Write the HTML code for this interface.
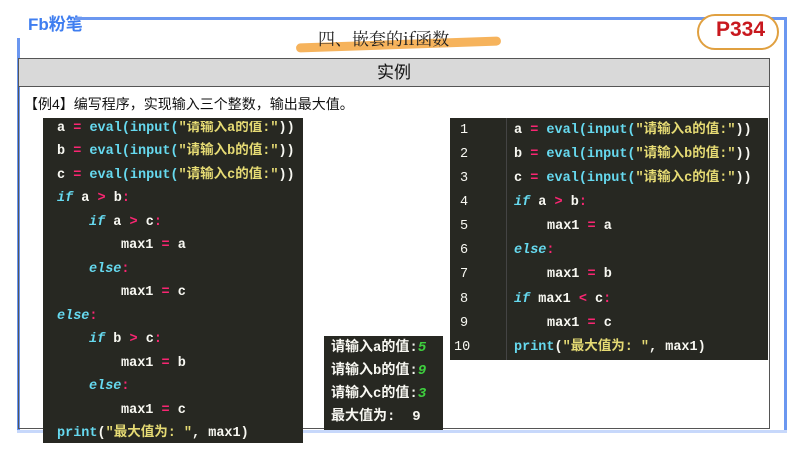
<!DOCTYPE html>
<html><head><meta charset="utf-8"><style>
*{margin:0;padding:0;box-sizing:border-box}
body{width:800px;height:450px;background:#fff;position:relative;overflow:hidden;font-family:"Liberation Sans","Noto Sans CJK SC",sans-serif}
.a{position:absolute}
.code{background:#272822;font-family:"Liberation Mono","Noto Sans CJK SC",monospace;font-size:13.5px;color:#f8f8f2;font-weight:bold}
.code div{position:absolute;white-space:pre;line-height:16px;height:16px}
.p{color:#f92672}.c{color:#66d9ef}.s{color:#e6db74}.k{color:#66d9ef;font-style:italic}.g{color:#3ecf3e;font-style:italic}
</style></head><body>
<div class="a" style="left:28px;top:10px;font-size:17px;font-weight:bold;color:#3f7ef0">Fb粉笔</div>
<div class="a" style="left:75px;top:17px;width:712px;height:3px;background:#6b97f0"></div>
<div class="a" style="left:17px;top:38px;width:3px;height:395px;background:#6b97f0"></div>
<div class="a" style="left:784px;top:17px;width:3px;height:416px;background:#6b97f0"></div>
<div class="a" style="left:17px;top:430px;width:770px;height:3px;background:#c7d8fb"></div>
<div class="a" style="left:296px;top:40px;width:205px;height:9px;background:#f4a640;border-radius:5px;transform:rotate(-2deg);opacity:.85"></div>
<div class="a" style="left:318px;top:27px;font-size:17px;font-family:'Noto Serif CJK SC',serif;color:#222;line-height:22px">四、嵌套的if函数</div>
<div class="a" style="left:697px;top:14px;width:82px;height:36px;border:2px solid #e0a040;border-radius:20px;background:#fff"></div>
<div class="a" style="left:716px;top:18px;font-size:21px;font-weight:bold;color:#c8181e">P334</div>
<div class="a" style="left:18px;top:58px;width:752px;height:29px;background:#d9d9d9;border:1px solid #555;text-align:center;font-size:17px;line-height:27px;color:#111">实例</div>
<div class="a" style="left:18px;top:86px;width:752px;height:343px;border:1px solid #555;border-top:none"></div>
<div class="a" style="left:24px;top:94px;font-size:14px;color:#111">【例4】编写程序，实现输入三个整数，输出最大值。</div>
<div class="a code" style="left:43px;top:121px;width:260px;height:322px;">
<div style="left:14px;top:0px"><span>a</span> <span class="p">=</span> <span class="c">eval(input(</span><span class="s">"请输入a的值:"</span>))</div>
<div style="left:14px;top:23px">b <span class="p">=</span> <span class="c">eval(input(</span><span class="s">"请输入b的值:"</span>))</div>
<div style="left:14px;top:47px">c <span class="p">=</span> <span class="c">eval(input(</span><span class="s">"请输入c的值:"</span>))</div>
<div style="left:14px;top:70px"><span class="k">if</span> a <span class="p">&gt;</span> b<span class="p">:</span></div>
<div style="left:46px;top:94px"><span class="k">if</span> a <span class="p">&gt;</span> c<span class="p">:</span></div>
<div style="left:78px;top:117px">max1 <span class="p">=</span> a</div>
<div style="left:46px;top:141px"><span class="k">else</span><span class="p">:</span></div>
<div style="left:78px;top:164px">max1 <span class="p">=</span> c</div>
<div style="left:14px;top:188px"><span class="k">else</span><span class="p">:</span></div>
<div style="left:46px;top:211px"><span class="k">if</span> b <span class="p">&gt;</span> c<span class="p">:</span></div>
<div style="left:78px;top:235px">max1 <span class="p">=</span> b</div>
<div style="left:46px;top:258px"><span class="k">else</span><span class="p">:</span></div>
<div style="left:78px;top:282px">max1 <span class="p">=</span> c</div>
<div style="left:14px;top:305px"><span class="c">print</span>(<span class="s">"最大值为: "</span>, max1)</div>
</div>
<div class="a" style="left:43px;top:118px;width:260px;height:3px;background:#272822"></div>
<div class="a code" style="left:450px;top:118px;width:318px;height:242px">
<div style="left:56px;top:0;width:1px;height:242px;background:#444"></div>
<div style="left:10px;top:5px;font-weight:normal">1</div>
<div style="left:10px;top:29px;font-weight:normal">2</div>
<div style="left:10px;top:53px;font-weight:normal">3</div>
<div style="left:10px;top:77px;font-weight:normal">4</div>
<div style="left:10px;top:101px;font-weight:normal">5</div>
<div style="left:10px;top:125px;font-weight:normal">6</div>
<div style="left:10px;top:149px;font-weight:normal">7</div>
<div style="left:10px;top:174px;font-weight:normal">8</div>
<div style="left:10px;top:198px;font-weight:normal">9</div>
<div style="left:4px;top:222px;font-weight:normal">10</div>
<div style="left:64px;top:5px">a <span class="p">=</span> <span class="c">eval(input(</span><span class="s">"请输入a的值:"</span>))</div>
<div style="left:64px;top:29px">b <span class="p">=</span> <span class="c">eval(input(</span><span class="s">"请输入b的值:"</span>))</div>
<div style="left:64px;top:53px">c <span class="p">=</span> <span class="c">eval(input(</span><span class="s">"请输入c的值:"</span>))</div>
<div style="left:64px;top:77px"><span class="k">if</span> a <span class="p">&gt;</span> b<span class="p">:</span></div>
<div style="left:97px;top:101px">max1 <span class="p">=</span> a</div>
<div style="left:64px;top:125px"><span class="k">else</span><span class="p">:</span></div>
<div style="left:97px;top:149px">max1 <span class="p">=</span> b</div>
<div style="left:64px;top:174px"><span class="k">if</span> max1 <span class="p">&lt;</span> c<span class="p">:</span></div>
<div style="left:97px;top:198px">max1 <span class="p">=</span> c</div>
<div style="left:64px;top:222px"><span class="c">print</span>(<span class="s">"最大值为: "</span>, max1)</div>
</div>
<div class="a code" style="left:324px;top:336px;width:119px;height:94px;font-size:14px">
<div style="left:7px;top:4px">请输入a的值:<span class="g">5</span></div>
<div style="left:7px;top:27px">请输入b的值:<span class="g">9</span></div>
<div style="left:7px;top:50px">请输入c的值:<span class="g">3</span></div>
<div style="left:7px;top:73px">最大值为:  9</div>
</div>
</body></html>
